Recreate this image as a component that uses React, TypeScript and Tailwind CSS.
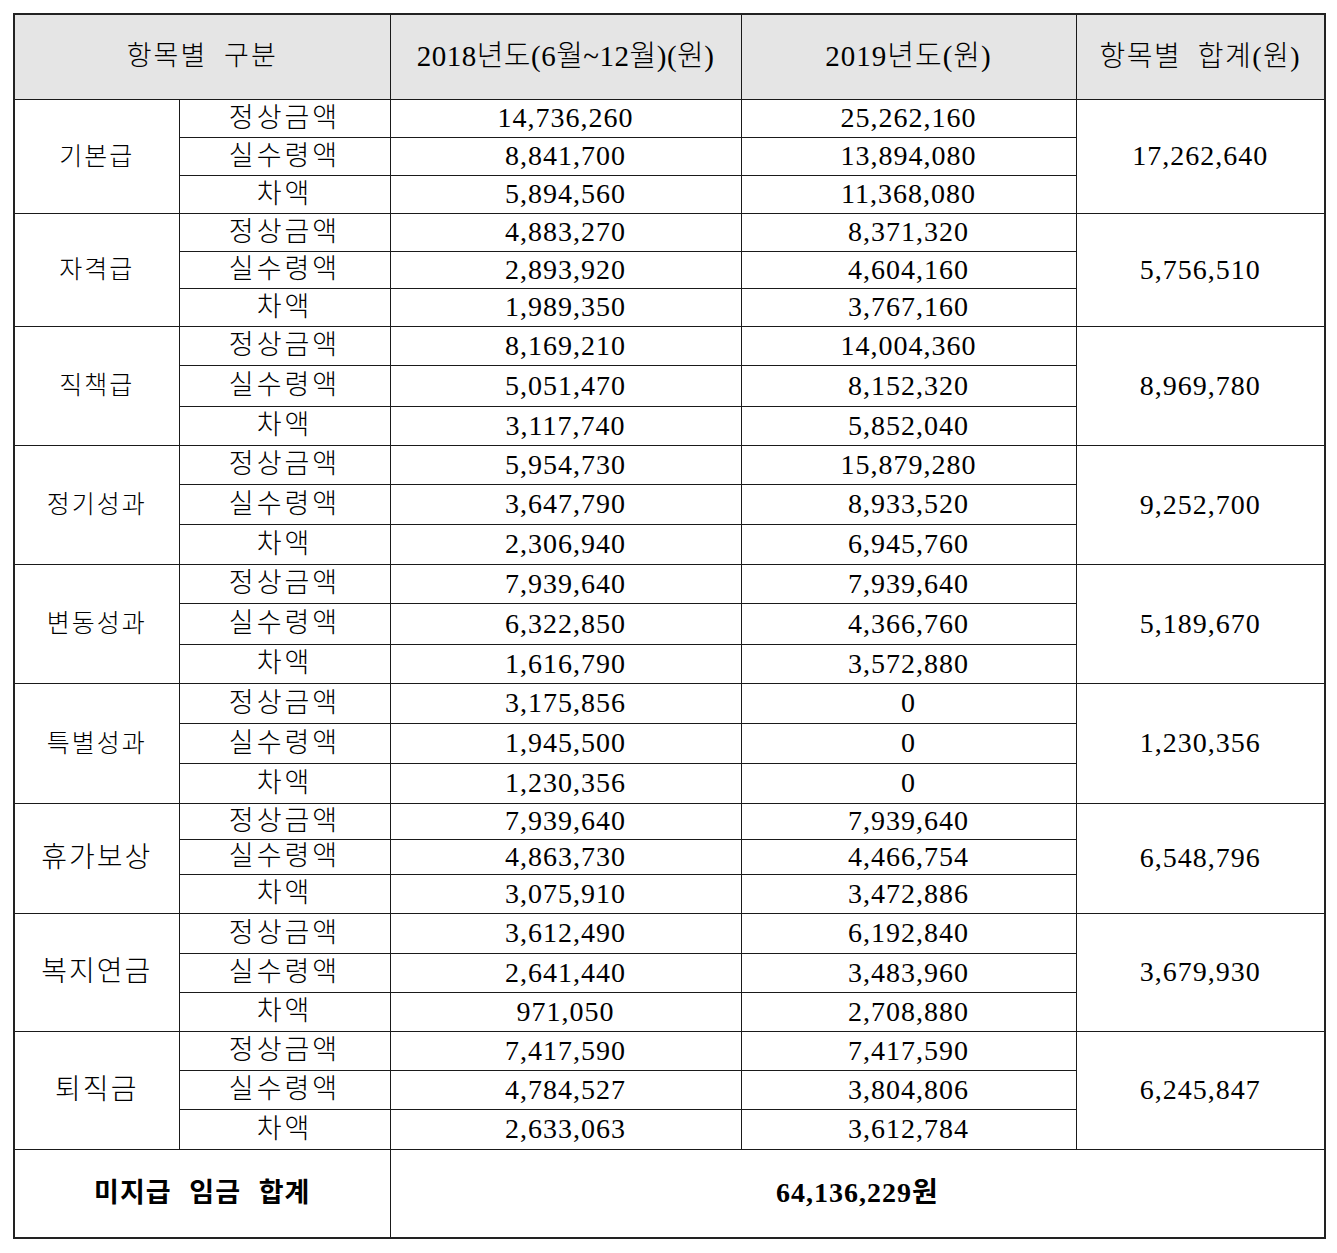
import React from "react";

type Group = {
  label: string;
  labelSize: string;
  rows: [string, string][];
  total: string;
  heights: number[];
};

const groups: Group[] = [
  { label: "기본급", labelSize: "text-[25px]", rows: [["14,736,260", "25,262,160"], ["8,841,700", "13,894,080"], ["5,894,560", "11,368,080"]], total: "17,262,640", heights: [38, 38, 38] },
  { label: "자격급", labelSize: "text-[25px]", rows: [["4,883,270", "8,371,320"], ["2,893,920", "4,604,160"], ["1,989,350", "3,767,160"]], total: "5,756,510", heights: [38, 37, 38] },
  { label: "직책급", labelSize: "text-[25px]", rows: [["8,169,210", "14,004,360"], ["5,051,470", "8,152,320"], ["3,117,740", "5,852,040"]], total: "8,969,780", heights: [39, 41, 39] },
  { label: "정기성과", labelSize: "text-[25px]", rows: [["5,954,730", "15,879,280"], ["3,647,790", "8,933,520"], ["2,306,940", "6,945,760"]], total: "9,252,700", heights: [39, 40, 40] },
  { label: "변동성과", labelSize: "text-[25px]", rows: [["7,939,640", "7,939,640"], ["6,322,850", "4,366,760"], ["1,616,790", "3,572,880"]], total: "5,189,670", heights: [39, 41, 39] },
  { label: "특별성과", labelSize: "text-[25px]", rows: [["3,175,856", "0"], ["1,945,500", "0"], ["1,230,356", "0"]], total: "1,230,356", heights: [40, 40, 40] },
  { label: "휴가보상", labelSize: "text-[28px]", rows: [["7,939,640", "7,939,640"], ["4,863,730", "4,466,754"], ["3,075,910", "3,472,886"]], total: "6,548,796", heights: [36, 35, 39] },
  { label: "복지연금", labelSize: "text-[28px]", rows: [["3,612,490", "6,192,840"], ["2,641,440", "3,483,960"], ["971,050", "2,708,880"]], total: "3,679,930", heights: [40, 39, 39] },
  { label: "퇴직금", labelSize: "text-[28px]", rows: [["7,417,590", "7,417,590"], ["4,784,527", "3,804,806"], ["2,633,063", "3,612,784"]], total: "6,245,847", heights: [39, 39, 40] },
];

const kinds = ["정상금액", "실수령액", "차액"];

const cell = "border border-[#1a1a1a] text-center align-middle p-0 leading-none";

export default function App() {
  return (
    <div
      className="bg-white w-[1337px] h-[1253px] pt-[13px] pl-[13px] text-black font-light"
      style={{ fontFamily: '"Liberation Serif", "Noto Sans CJK KR", serif' }}
    >
      <table className="border-collapse table-fixed w-[1311px] border-2 border-[#222]">
        <colgroup>
          <col className="w-[165px]" />
          <col className="w-[211px]" />
          <col className="w-[351px]" />
          <col className="w-[335px]" />
          <col className="w-[249px]" />
        </colgroup>
        <thead>
          <tr className="h-[85px] bg-[#e5e5e5]">
            <th colSpan={2} className={`${cell} font-light text-[27px] tracking-[2px] [word-spacing:8px]`}>항목별 구분</th>
            <th className={`${cell} font-light text-[29px] tracking-[0.5px]`}>2018년도(6월~12월)(원)</th>
            <th className={`${cell} font-light text-[29px] tracking-[1px]`}>2019년도(원)</th>
            <th className={`${cell} font-light text-[28px] tracking-[1.5px] [word-spacing:8px]`}>항목별 합계(원)</th>
          </tr>
        </thead>
        <tbody>
          {groups.map((g) =>
            g.rows.map((r, i) => (
              <tr key={g.label + i} style={{ height: g.heights[i] }}>
                {i === 0 && (
                  <td rowSpan={3} className={`${cell} ${g.labelSize} tracking-[2px]`}>
                    {g.label}
                  </td>
                )}
                <td className={`${cell} text-[27px] tracking-[3px]`}>{kinds[i]}</td>
                <td className={`${cell} text-[28px] tracking-[1px]`}>{r[0]}</td>
                <td className={`${cell} text-[28px] tracking-[1px]`}>{r[1]}</td>
                {i === 0 && (
                  <td rowSpan={3} className={`${cell} text-[28px] tracking-[1px]`}>
                    {g.total}
                  </td>
                )}
              </tr>
            ))
          )}
          <tr className="h-[89px]">
            <td colSpan={2} className={`${cell} font-bold text-[27px] tracking-[1px] [word-spacing:10px]`}>미지급 임금 합계</td>
            <td colSpan={3} className={`${cell} font-bold text-[28px] tracking-[1px]`}>64,136,229원</td>
          </tr>
        </tbody>
      </table>
    </div>
  );
}
